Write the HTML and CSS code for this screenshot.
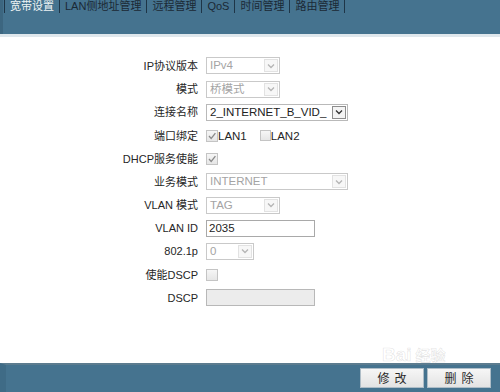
FILE: index.html
```html
<!DOCTYPE html>
<html lang="zh-CN">
<head>
<meta charset="utf-8">
<title>宽带设置</title>
<link rel="stylesheet" href="styles.css">
</head>
<body>
<div class="page">
  <header class="topbar">
    <nav class="tabs">
      <span class="sep"></span><span class="tab active">宽带设置</span>
      <span class="sep"></span><span class="tab">LAN侧地址管理</span>
      <span class="sep"></span><span class="tab">远程管理</span>
      <span class="sep"></span><span class="tab">QoS</span>
      <span class="sep"></span><span class="tab">时间管理</span>
      <span class="sep"></span><span class="tab">路由管理</span>
      <span class="sep"></span>
    </nav>
  </header>
  <div class="strip"></div>
  <main class="content">
    <div class="form">
      <label class="lbl">IP协议版本</label>
      <div class="select w74 disabled"><span class="val">IPv4</span><span class="arrow"><svg viewBox="0 0 8 6"><path d="M1 1.5 L4 4.5 L7 1.5"/></svg></span></div>

      <label class="lbl">模式</label>
      <div class="select w74 disabled"><span class="val">桥模式</span><span class="arrow"><svg viewBox="0 0 8 6"><path d="M1 1.5 L4 4.5 L7 1.5"/></svg></span></div>

      <label class="lbl">连接名称</label>
      <div class="select w142"><span class="val">2_INTERNET_B_VID_</span><span class="arrow"><svg viewBox="0 0 8 6"><path d="M1 1.5 L4 4.5 L7 1.5"/></svg></span></div>

      <label class="lbl">端口绑定</label>
      <div class="checks">
        <span class="cb checked"><svg viewBox="0 0 10 10"><path d="M2 5 L4.2 7.4 L8.4 2.2"/></svg></span><span class="cbtext">LAN1</span>
        <span class="cb small"></span><span class="cbtext">LAN2</span>
      </div>

      <label class="lbl">DHCP服务使能</label>
      <div class="checks"><span class="cb checked"><svg viewBox="0 0 10 10"><path d="M2 5 L4.2 7.4 L8.4 2.2"/></svg></span></div>

      <label class="lbl">业务模式</label>
      <div class="select w142 disabled"><span class="val">INTERNET</span><span class="arrow"><svg viewBox="0 0 8 6"><path d="M1 1.5 L4 4.5 L7 1.5"/></svg></span></div>

      <label class="lbl">VLAN 模式</label>
      <div class="select w74 disabled"><span class="val">TAG</span><span class="arrow"><svg viewBox="0 0 8 6"><path d="M1 1.5 L4 4.5 L7 1.5"/></svg></span></div>

      <label class="lbl">VLAN ID</label>
      <div class="input w108">2035</div>

      <label class="lbl">802.1p</label>
      <div class="select w48 disabled"><span class="val">0</span><span class="arrow"><svg viewBox="0 0 8 6"><path d="M1 1.5 L4 4.5 L7 1.5"/></svg></span></div>

      <label class="lbl">使能DSCP</label>
      <div class="checks"><span class="cb"></span></div>

      <label class="lbl">DSCP</label>
      <div class="input w108 disabled"></div>
    </div>
  </main>
  <footer class="bottombar">
    <button class="btn">修改</button>
    <button class="btn">删除</button>
  </footer>
  <div class="watermark">Bai<span class="wm-cn">经验</span></div>
</div>
</body>
</html>
```

FILE: styles.css
```css
* { box-sizing: border-box; }
html, body { margin: 0; padding: 0; }
body {
  width: 500px;
  height: 392px;
  overflow: hidden;
  background: #ffffff;
  font-family: "Liberation Sans", "Noto Sans CJK SC", sans-serif;
}
.page {
  position: relative;
  width: 500px;
  height: 392px;
  display: flex;
  flex-direction: column;
}
.topbar {
  height: 34px;
  background: #45738f;
  border-left: 3px solid #3c6680;
  flex: none;
}
.tabs {
  display: flex;
  align-items: flex-start;
  padding-left: 1px;
  height: 14px;
}
.sep {
  width: 1px;
  height: 13px;
  background: #1e3547;
  flex: none;
}
.tab {
  font-size: 11px;
  line-height: 13px;
  padding: 0 5px;
  color: #1b2935;
  white-space: nowrap;
}
.tab.active {
  color: #eef4f4;
}
.strip {
  height: 3px;
  background: #dfe7ec;
  flex: none;
}
.content {
  flex: 1;
  background: #ffffff;
}
.form {
  display: grid;
  grid-template-columns: 198px auto;
  grid-auto-rows: 23.2px;
  column-gap: 8px;
  padding-top: 17.4px;
  justify-content: start;
}
.lbl {
  justify-self: end;
  align-self: center;
  font-size: 11px;
  line-height: 14px;
  color: #262626;
  white-space: nowrap;
}
.select, .input {
  align-self: center;
  height: 17px;
  border: 1px solid #b9b9b9;
  background: #ffffff;
  display: flex;
  align-items: center;
  font-size: 11.5px;
  color: #222;
}
.w74 { width: 74px; }
.w142 { width: 142px; }
.w108 { width: 109px; }
.w48 { width: 48px; }
.select .val {
  flex: 1;
  padding-left: 3px;
  overflow: hidden;
  white-space: nowrap;
  line-height: 15px;
}
.select .arrow {
  flex: none;
  width: 14px;
  height: 13px;
  margin-right: 1px;
  border: 1px solid #8d8d8d;
  background: #f4f4f4;
  display: flex;
  align-items: center;
  justify-content: center;
}
.select .arrow svg {
  width: 8px;
  height: 6px;
  fill: none;
  stroke: #333;
  stroke-width: 1.3;
}
.select.disabled {
  border-color: #c9c9c9;
  color: #a4a4a4;
}
.select.disabled .arrow {
  border-color: #e2e2e2;
  background: #f7f7f7;
}
.select.disabled .arrow svg {
  stroke: #b5b5b5;
}
.input {
  padding-left: 2px;
  border-color: #a9a9a9;
  line-height: 15px;
}
.input.disabled {
  background: #ececec;
  border-color: #b8b8b8;
}
.checks {
  align-self: center;
  display: flex;
  align-items: center;
  height: 14px;
}
.cb {
  width: 12px;
  height: 12px;
  border: 1px solid #c4c4c4;
  background: linear-gradient(#f6f6f6, #e6e6e6);
  display: flex;
  align-items: center;
  justify-content: center;
  flex: none;
}
.cb svg {
  width: 10px;
  height: 10px;
  fill: none;
  stroke: #8a8a8a;
  stroke-width: 1.3;
}
.cb.small {
  width: 11px;
  height: 11px;
  margin-left: 13px;
}
.cbtext {
  font-size: 11.5px;
  color: #262626;
  line-height: 14px;
}
.bottombar {
  height: 29px;
  flex: none;
  background: #45738f;
  border-top: 2px solid #5c7c8f;
  border-left: 6px solid #3f6b86;
  display: flex;
  justify-content: flex-end;
  align-items: flex-start;
  gap: 3px;
  padding: 3px 9px 0 0;
}
.btn {
  width: 64px;
  height: 20px;
  margin: 0;
  padding: 0;
  border: 1px solid #aebdc7;
  background: linear-gradient(#f6f6f6, #e3e3e3);
  font-family: "Noto Sans CJK SC", sans-serif;
  font-size: 12px;
  line-height: 18px;
  letter-spacing: 5px;
  text-indent: 5px;
  color: #2a2a2a;
}
.watermark {
  position: absolute;
  left: 382px;
  top: 345px;
  font-family: "Liberation Sans", "Noto Sans CJK SC", sans-serif;
  font-size: 19px;
  font-weight: bold;
  color: rgba(255, 255, 255, 0.6);
  -webkit-text-stroke: 0.6px rgba(160, 160, 160, 0.3);
  line-height: 20px;
  pointer-events: none;
}
.wm-cn {
  font-size: 15px;
  margin-left: 4px;
}
```
